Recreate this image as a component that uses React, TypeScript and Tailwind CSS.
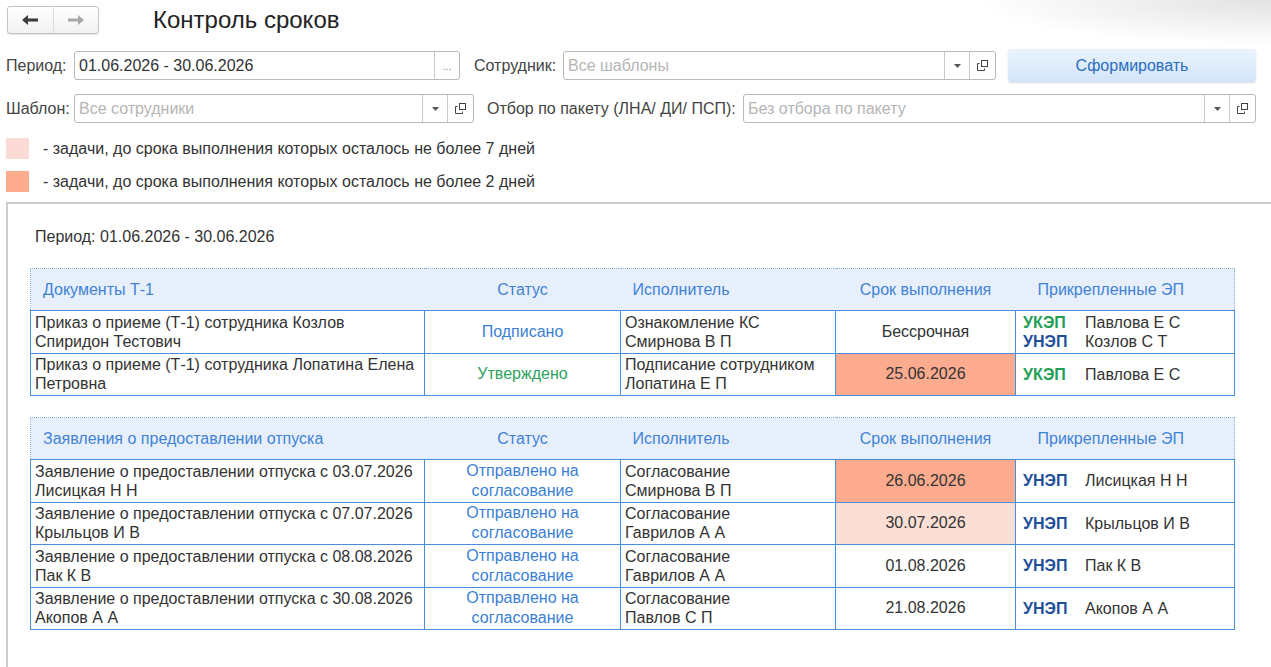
import React from "react";

// ─── Data ────────────────────────────────────────────────────────────────────

type Sig = { kind: "УКЭП" | "УНЭП"; name: string };
type Row = {
  doc: string[];
  status: string;
  statusColor: string;
  exec: string[];
  due: string;
  dueBg?: string;
  sigs: Sig[];
};

const T1_ROWS: Row[] = [
  {
    doc: ["Приказ о приеме (Т-1) сотрудника Козлов", "Спиридон Тестович"],
    status: "Подписано",
    statusColor: "text-[#3a7fd5]",
    exec: ["Ознакомление КС", "Смирнова В П"],
    due: "Бессрочная",
    sigs: [
      { kind: "УКЭП", name: "Павлова Е С" },
      { kind: "УНЭП", name: "Козлов С Т" },
    ],
  },
  {
    doc: ["Приказ о приеме (Т-1) сотрудника Лопатина Елена", "Петровна"],
    status: "Утверждено",
    statusColor: "text-[#2ea15f]",
    exec: ["Подписание сотрудником", "Лопатина Е П"],
    due: "25.06.2026",
    dueBg: "bg-[#fcab8f]",
    sigs: [{ kind: "УКЭП", name: "Павлова Е С" }],
  },
];

const LEAVE_ROWS: Row[] = [
  {
    doc: ["Заявление о предоставлении отпуска с 03.07.2026", "Лисицкая Н Н"],
    status: "Отправлено на согласование",
    statusColor: "text-[#3a7fd5]",
    exec: ["Согласование", "Смирнова В П"],
    due: "26.06.2026",
    dueBg: "bg-[#fcab8f]",
    sigs: [{ kind: "УНЭП", name: "Лисицкая Н Н" }],
  },
  {
    doc: ["Заявление о предоставлении отпуска с 07.07.2026", "Крыльцов И В"],
    status: "Отправлено на согласование",
    statusColor: "text-[#3a7fd5]",
    exec: ["Согласование", "Гаврилов А А"],
    due: "30.07.2026",
    dueBg: "bg-[#fbdfd4]",
    sigs: [{ kind: "УНЭП", name: "Крыльцов И В" }],
  },
  {
    doc: ["Заявление о предоставлении отпуска с 08.08.2026", "Пак К В"],
    status: "Отправлено на согласование",
    statusColor: "text-[#3a7fd5]",
    exec: ["Согласование", "Гаврилов А А"],
    due: "01.08.2026",
    sigs: [{ kind: "УНЭП", name: "Пак К В" }],
  },
  {
    doc: ["Заявление о предоставлении отпуска с 30.08.2026", "Акопов А А"],
    status: "Отправлено на согласование",
    statusColor: "text-[#3a7fd5]",
    exec: ["Согласование", "Павлов С П"],
    due: "21.08.2026",
    sigs: [{ kind: "УНЭП", name: "Акопов А А" }],
  },
];

// ─── Small pieces ────────────────────────────────────────────────────────────

function DropIcon() {
  return (
    <svg width="7" height="4" viewBox="0 0 7 4">
      <path d="M0 0h7L3.5 4z" fill="#555" />
    </svg>
  );
}

function CopyIcon() {
  return (
    <svg width="11" height="11" viewBox="0 0 11 11" fill="none" stroke="#444" strokeWidth="1">
      <rect x="4.5" y="0.5" width="6" height="6" />
      <path d="M2.5 3.5h-2v7h7v-2" />
    </svg>
  );
}

function Field({
  value,
  placeholder,
  width,
  dots,
}: {
  value?: string;
  placeholder?: string;
  width: string;
  dots?: boolean;
}) {
  return (
    <div className={`${width} h-[29px] flex border border-[#b9b9b9] rounded-[3px] bg-white`}>
      <div className={`flex-1 flex items-center px-[4px] text-[16px] ${value ? "text-[#333]" : "text-[#b5b5b5]"}`}>
        {value ?? placeholder}
      </div>
      {dots ? (
        <div className="w-[25px] border-l border-[#c8c8c8] flex items-end justify-center pb-[7px] text-[10px] text-[#777] leading-none">
          ...
        </div>
      ) : (
        <>
          <div className="w-[25px] border-l border-[#c8c8c8] flex items-center justify-center">
            <DropIcon />
          </div>
          <div className="w-[26px] border-l border-[#c8c8c8] flex items-center justify-center">
            <CopyIcon />
          </div>
        </>
      )}
    </div>
  );
}

function SigLine({ sig }: { sig: Sig }) {
  return (
    <div className="flex">
      <span className={`w-[62px] font-bold ${sig.kind === "УКЭП" ? "text-[#1f9e55]" : "text-[#1f4f9b]"}`}>{sig.kind}</span>
      <span>{sig.name}</span>
    </div>
  );
}

const cell = "border-[1.5px] border-[#4a8ddb] align-middle";

function ReportTable({ title, rows }: { title: string; rows: Row[] }) {
  return (
    <table className="w-[1204px] border-collapse table-fixed text-[16px] leading-[20px] text-[#333]">
      <colgroup>
        <col className="w-[394px]" />
        <col className="w-[196px]" />
        <col className="w-[215px]" />
        <col className="w-[180px]" />
        <col className="w-[219px]" />
      </colgroup>
      <thead>
        <tr className="h-[42px] bg-[#e7f0fa] text-[#3f82d6]">
          <th className="border-t border-l border-dotted border-[#86afe0] text-left font-normal pl-[12px]">{title}</th>
          <th className="border-t border-dotted border-[#86afe0] font-normal">Статус</th>
          <th className="border-t border-dotted border-[#86afe0] text-left font-normal pl-[12px]">Исполнитель</th>
          <th className="border-t border-dotted border-[#86afe0] font-normal">Срок выполнения</th>
          <th className="border-t border-r border-dotted border-[#86afe0] text-left font-normal pl-[22px]">Прикрепленные ЭП</th>
        </tr>
      </thead>
      <tbody>
        {rows.map((r, i) => (
          <tr key={i} className="h-[42.5px]">
            <td className={`${cell} pl-[4px] leading-[19px]`}>
              {r.doc.map((l) => (
                <div key={l}>{l}</div>
              ))}
            </td>
            <td className={`${cell} text-center leading-[20px] ${r.statusColor}`}>
              {r.status === "Отправлено на согласование" ? (
                <>
                  <div>Отправлено на</div>
                  <div>согласование</div>
                </>
              ) : (
                r.status
              )}
            </td>
            <td className={`${cell} pl-[4px] leading-[19px]`}>
              {r.exec.map((l) => (
                <div key={l}>{l}</div>
              ))}
            </td>
            <td className={`${cell} text-center ${r.dueBg ?? ""}`}>{r.due}</td>
            <td className={`${cell} pl-[7px] leading-[19px]`}>
              {r.sigs.map((s) => (
                <SigLine key={s.kind + s.name} sig={s} />
              ))}
            </td>
          </tr>
        ))}
      </tbody>
    </table>
  );
}

// ─── Page ────────────────────────────────────────────────────────────────────

export default function App() {
  return (
    <div className="relative w-[1271px] h-[667px] overflow-hidden bg-white font-['Liberation_Sans',Arial,sans-serif] text-[#333]">
      {/* soft shadow top right */}
      <div className="absolute right-0 top-0 w-[300px] h-[45px] bg-[radial-gradient(ellipse_at_top_right,#e2e2e2,transparent_70%)]" />

      {/* Title bar */}
      <div className="relative flex items-center pt-[6px] pl-[7px]">
        <div className="flex w-[92px] h-[28px] border border-[#c4c4c4] rounded-[3px] bg-gradient-to-b from-white to-[#f1f1f1] shadow-[0_1px_1px_rgba(0,0,0,0.12)]">
          <div className="flex-1 flex items-center justify-center border-r border-[#dcdcdc]">
            <svg width="16" height="10" viewBox="0 0 16 10">
              <path d="M0 5 L6 0 V3.5 H16 V6.5 H6 V10 Z" fill="#3a3a3a" />
            </svg>
          </div>
          <div className="flex-1 flex items-center justify-center">
            <svg width="16" height="10" viewBox="0 0 16 10">
              <path d="M16 5 L10 0 V3.5 H0 V6.5 H10 V10 Z" fill="#a8a8a8" />
            </svg>
          </div>
        </div>
        <h1 className="ml-[54px] text-[24px] text-[#222] leading-none">Контроль сроков</h1>
      </div>

      {/* Filters row 1 */}
      <div className="relative flex items-center mt-[15px] pl-[6px]">
        <span className="text-[16px] text-[#444] w-[68px]">Период:</span>
        <Field value="01.06.2026 - 30.06.2026" width="w-[386px]" dots />
        <span className="ml-[14px] text-[16px] text-[#444] w-[89px]">Сотрудник:</span>
        <Field placeholder="Все шаблоны" width="w-[433px]" />
        <button className="ml-[12px] w-[248px] h-[33px] rounded-[3px] bg-gradient-to-b from-[#eaf3fd] to-[#d3e5f8] shadow-[0_1px_2px_rgba(0,0,0,0.15)] text-[16px] text-[#2a6ebf]">
          Сформировать
        </button>
      </div>

      {/* Filters row 2 */}
      <div className="flex items-center mt-[12px] pl-[6px]">
        <span className="text-[16px] text-[#444] w-[68px]">Шаблон:</span>
        <Field placeholder="Все сотрудники" width="w-[400px]" />
        <span className="ml-[13px] text-[16px] text-[#444] w-[256px]">Отбор по пакету (ЛНА/ ДИ/ ПСП):</span>
        <Field placeholder="Без отбора по пакету" width="w-[513px]" />
      </div>

      {/* Legend */}
      <div className="flex flex-col gap-[12px] mt-[15px] pl-[6px] text-[16px] leading-[21px] text-[#333]">
        <div className="flex items-center">
          <div className="w-[23px] h-[21px] bg-[#fcdad5]" />
          <span className="ml-[14px]">- задачи, до срока выполнения которых осталось не более 7 дней</span>
        </div>
        <div className="flex items-center">
          <div className="w-[23px] h-[21px] bg-[#fcab8f]" />
          <span className="ml-[14px]">- задачи, до срока выполнения которых осталось не более 2 дней</span>
        </div>
      </div>

      {/* Report */}
      <div className="mt-[10px] ml-[6px] h-[500px] border-t-2 border-l-2 border-[#cccccc] pl-[22px] pt-[21px]">
        <div className="pl-[5px] text-[16px] leading-[24px] text-[#333]">Период: 01.06.2026 - 30.06.2026</div>
        <div className="mt-[19px]">
          <ReportTable title="Документы Т-1" rows={T1_ROWS} />
        </div>
        <div className="mt-[21px]">
          <ReportTable title="Заявления о предоставлении отпуска" rows={LEAVE_ROWS} />
        </div>
      </div>
    </div>
  );
}
